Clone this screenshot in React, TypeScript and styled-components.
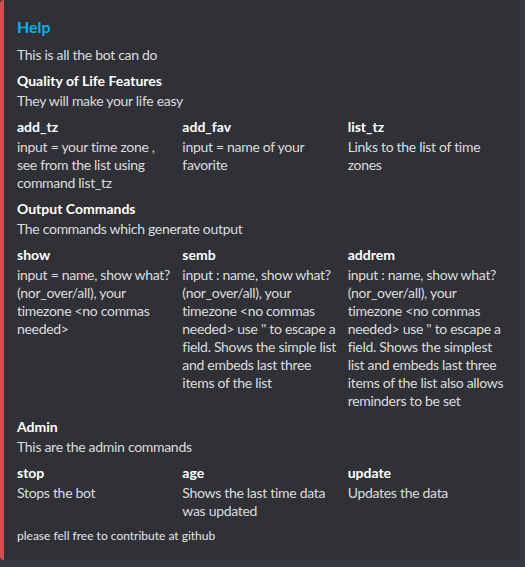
import styled, { createGlobalStyle } from "styled-components";

const GlobalStyle = createGlobalStyle`
  html, body {
    margin: 0;
    padding: 0;
    background: #36393f;
  }
  body {
    font-family: Lato, "Noto Sans", sans-serif;
    -webkit-font-smoothing: antialiased;
  }
`;

type Field = {
  name: string;
  value: string;
  inline?: boolean;
};

const fields: Field[] = [
  { name: "Quality of Life Features", value: "They will make your life easy" },
  {
    name: "add_tz",
    value: "input = your time zone , see from the list using command list_tz",
    inline: true,
  },
  { name: "add_fav", value: "input = name of your favorite", inline: true },
  { name: "list_tz", value: "Links to the list of time zones", inline: true },
  { name: "Output Commands", value: "The commands which generate output" },
  {
    name: "show",
    value: "input = name, show what? (nor_over/all), your timezone <no commas needed>",
    inline: true,
  },
  {
    name: "semb",
    value:
      "input : name, show what? (nor_over/all), your timezone <no commas needed> use '' to escape a field. Shows the simple list and embeds last three items of the list",
    inline: true,
  },
  {
    name: "addrem",
    value:
      "input : name, show what? (nor_over/all), your timezone <no commas needed> use '' to escape a field. Shows the simplest list and embeds last three items of the list also allows reminders to be set",
    inline: true,
  },
  { name: "Admin", value: "This are the admin commands" },
  { name: "stop", value: "Stops the bot", inline: true },
  { name: "age", value: "Shows the last time data was updated", inline: true },
  { name: "update", value: "Updates the data", inline: true },
];

const App = () => {
  return (
    <>
      <GlobalStyle />
      <Embed>
        <Title>Help</Title>
        <Description>This is all the bot can do</Description>
        <Fields>
          {fields.map((field) => (
            <FieldBox key={field.name} $inline={!!field.inline}>
              <FieldName>{field.name}</FieldName>
              <FieldValue>{field.value}</FieldValue>
            </FieldBox>
          ))}
        </Fields>
        <Footer>please fell free to contribute at github</Footer>
      </Embed>
    </>
  );
};

export default App;

const Embed = styled.div`
  box-sizing: border-box;
  width: 520px;
  display: flex;
  flex-direction: column;
  background: #2f3136;
  border-left: 4px solid #d84a4a;
  border-radius: 4px;
  padding: 8px 15px 16px 13px;
`;

const Title = styled.div`
  margin-top: 8px;
  font-size: 16px;
  line-height: 22px;
  font-weight: 700;
  color: #00b0f4;
`;

const Description = styled.div`
  margin-top: 8px;
  font-size: 14px;
  line-height: 18px;
  letter-spacing: -0.3px;
  color: #dcddde;
`;

const Fields = styled.div`
  margin-top: 8px;
  display: grid;
  grid-template-columns: repeat(3, minmax(0, 1fr));
  gap: 8px;
`;

const FieldBox = styled.div<{ $inline: boolean }>`
  grid-column: ${({ $inline }) => ($inline ? "auto" : "1 / -1")};
  min-width: 0;
`;

const FieldName = styled.div`
  margin-bottom: 2px;
  font-size: 14px;
  line-height: 18px;
  font-weight: 700;
  color: #ffffff;
`;

const FieldValue = styled.div`
  font-size: 14px;
  line-height: 18px;
  letter-spacing: -0.3px;
  color: #dcddde;
`;

const Footer = styled.div`
  margin-top: 8px;
  font-size: 12px;
  line-height: 16px;
  font-weight: 400;
  color: #e4e5e6;
`;
